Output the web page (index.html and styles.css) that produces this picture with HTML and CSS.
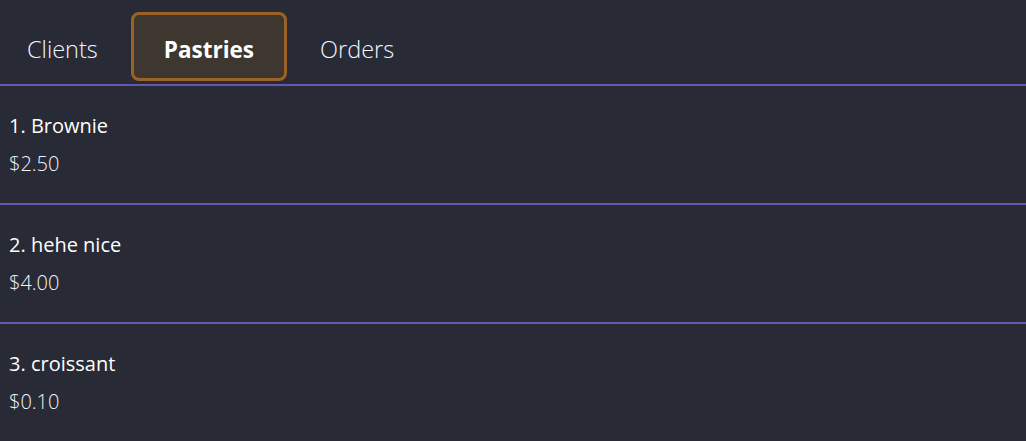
FILE: index.html
```html
<!DOCTYPE html>
<html>
<head>
<meta charset="utf-8">
<link rel="stylesheet" href="styles.css">
</head>
<body>
<nav class="tabs">
  <div class="tab">Clients</div>
  <div class="tab active">Pastries</div>
  <div class="tab">Orders</div>
</nav>
<ul class="list">
  <li class="item"><div class="name">1. Brownie</div><div class="price">$2.50</div></li>
  <li class="item"><div class="name">2. hehe nice</div><div class="price">$4.00</div></li>
  <li class="item"><div class="name">3. croissant</div><div class="price">$0.10</div></li>
</ul>
</body>
</html>
```
FILE: styles.css
```css
html, body {
  margin: 0;
  padding: 0;
  background: #282a36;
  font-family: "Open Sans", "Noto Sans", sans-serif;
  color: #f8f8f2;
}
.tabs {
  display: flex;
  padding-top: 12px;
  padding-bottom: 3px;
  border-bottom: 2px solid #6357b0;
}
.tab {
  box-sizing: border-box;
  height: 69px;
  padding: 5px 30px 0;
  display: flex;
  align-items: center;
  font-size: 23.5px;
  font-weight: 300;
  color: #f2f5ff;
  border: 3px solid transparent;
  border-radius: 8px;
}
.tab:first-child {
  padding-left: 24px;
}
.tab.active {
  background: #3e372f;
  border-color: #9a6226;
  font-weight: 700;
  font-size: 22.5px;
  padding: 5px 30px 0;
  color: #ffffff;
}
.list {
  list-style: none;
  margin: 0;
  padding: 0;
}
.item {
  box-sizing: border-box;
  height: 119px;
  padding: 26px 9px 0;
  border-bottom: 2px solid #6357b0;
}
.item:last-child {
  border-bottom: none;
}
.name {
  font-size: 20px;
  line-height: 28px;
  color: #ffffff;
}
.price {
  margin-top: 10px;
  font-size: 20px;
  line-height: 28px;
  font-weight: 300;
  color: #f0f4ff;
}
```
